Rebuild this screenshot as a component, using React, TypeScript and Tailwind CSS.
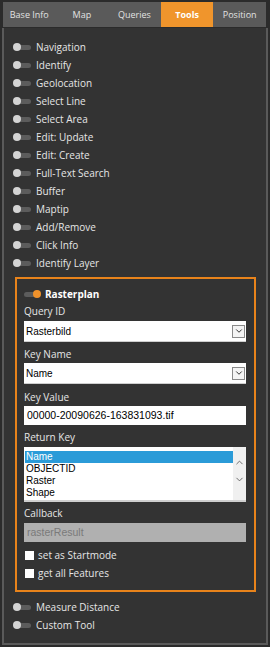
import { ChevronDown, ChevronUp } from "lucide-react";

const TABS = ["Base Info", "Map", "Queries", "Tools", "Position"];

const TOOLS_TOP = [
  "Navigation",
  "Identify",
  "Geolocation",
  "Select Line",
  "Select Area",
  "Edit: Update",
  "Edit: Create",
  "Full-Text Search",
  "Buffer",
  "Maptip",
  "Add/Remove",
  "Click Info",
  "Identify Layer",
];

const TOOLS_BOTTOM = ["Measure Distance", "Custom Tool"];

const RETURN_KEYS = ["Name", "OBJECTID", "Raster", "Shape"];

function Toggle({ on = false }: { on?: boolean }) {
  return (
    <div className="relative w-[18px] h-[8px] flex items-center">
      <div
        className={`absolute h-[5px] rounded-full bg-[#5c5c5c] ${
          on ? "left-0 right-[3px]" : "left-[3px] right-0"
        }`}
      />
      {/* knob */}
      <div
        className={`absolute h-[8px] w-[8px] rounded-full ${
          on ? "right-[1px] bg-[#f0922b]" : "left-0 bg-[#d4d4d4]"
        }`}
      />
    </div>
  );
}

function ToolRow({ label }: { label: string }) {
  return (
    <div className="h-[18px] flex items-center pl-[9px]">
      <Toggle />
      <span className="ml-[5px] text-[10px] text-[#e6e6e6]">{label}</span>
    </div>
  );
}

function Select({ value }: { value: string }) {
  return (
    <div className="h-[21px] bg-white flex items-center pl-[2px] pr-[1px] border-b border-[#cfcfcf]">
      <span className="flex-1 text-[10px] text-black font-['Liberation_Sans',Arial,sans-serif]">
        {value}
      </span>
      <div className="w-[13px] h-[13px] border border-[#8a8a8a] bg-[#f4f4f4] flex items-center justify-center">
        <ChevronDown className="w-[10px] h-[10px] text-[#222]" strokeWidth={2.2} />
      </div>
    </div>
  );
}

function FieldLabel({ text, className = "" }: { text: string; className?: string }) {
  return (
    <div className={`h-[17px] flex items-center text-[10px] text-[#e6e6e6] ${className}`}>
      {text}
    </div>
  );
}

export default function App() {
  return (
    <div className="w-[270px] h-[647px] bg-[#2b2b2b] pt-[2px] font-['Open_Sans','Noto_Sans',sans-serif] overflow-hidden">
      {/* Tabs */}
      <div className="ml-[3px] mr-[4px] h-[25px] flex bg-[#5a5a5a]">
        {TABS.map((tab) => (
          <div
            key={tab}
            className={`flex-1 flex items-center justify-center text-[9px] ${
              tab === "Tools"
                ? "bg-[#f0952c] text-white font-bold"
                : "text-[#e2e2e2]"
            }`}
          >
            {tab}
          </div>
        ))}
      </div>

      {/* Panel */}
      <div className="mt-[1px] mx-[2px] h-[617px] border-x-2 border-b-2 border-[#5a5a5a] bg-[#333333] pt-[10px]">
        {TOOLS_TOP.map((t) => (
          <ToolRow key={t} label={t} />
        ))}

        {/* Rasterplan box */}
        <div className="mt-[5px] ml-[11px] mr-[10px] border-2 border-[#e8831b] pt-[6px] pl-[7px] pr-[8px] pb-[8px]">
          <div className="h-[18px] flex items-center">
            <Toggle on />
            <span className="ml-[3px] text-[10px] font-bold text-white">Rasterplan</span>
          </div>

          <FieldLabel text="Query ID" />
          <div className="mt-[1px]">
            <Select value="Rasterbild" />
          </div>

          <FieldLabel text="Key Name" className="mt-[4px]" />
          <Select value="Name" />

          <FieldLabel text="Key Value" className="mt-[5px]" />
          <div className="h-[19px] bg-white flex items-center pl-[3px] text-[10.5px] text-black font-['Liberation_Sans',Arial,sans-serif]">
            00000-20090626-163831093.tif
          </div>

          <FieldLabel text="Return Key" className="mt-[4px]" />
          <div className="mt-[1px] h-[55px] bg-white flex pt-[4px] pl-[1px] border-b-2 border-[#cfcfcf]">
            <div className="flex-1 flex flex-col font-['Liberation_Sans',Arial,sans-serif] text-[10px] leading-[12px]">
              {RETURN_KEYS.map((k, i) => (
                <div
                  key={k}
                  className={`h-[12px] pl-[1px] ${
                    i === 0 ? "bg-[#2b9bd8] text-white" : "text-black"
                  }`}
                >
                  {k}
                </div>
              ))}
            </div>
            <div className="w-[13px] bg-[#f0f0f0] flex flex-col items-center pt-[10px] gap-[6px] -mt-[4px]">
              <ChevronUp className="w-[11px] h-[11px] text-[#555]" strokeWidth={1.8} />
              <ChevronDown className="w-[11px] h-[11px] text-[#555]" strokeWidth={1.8} />
            </div>
          </div>

          <FieldLabel text="Callback" className="mt-[3px]" />
          <div className="mt-[1px] h-[19px] bg-[#b0b0b0] flex items-center pl-[3px] text-[10.5px] text-[#7a7a7a] font-['Liberation_Sans',Arial,sans-serif]">
            rasterResult
          </div>

          <div className="mt-[4px] h-[18px] flex items-center">
            <div className="w-[9px] h-[9px] bg-white ml-[1px]" />
            <span className="ml-[4px] text-[10px] text-[#e6e6e6]">set as Startmode</span>
          </div>
          <div className="h-[18px] flex items-center">
            <div className="w-[9px] h-[9px] bg-white ml-[1px]" />
            <span className="ml-[4px] text-[10px] text-[#e6e6e6]">get all Features</span>
          </div>
        </div>

        <div className="mt-[6px]">
          {TOOLS_BOTTOM.map((t) => (
            <ToolRow key={t} label={t} />
          ))}
        </div>
      </div>
    </div>
  );
}
